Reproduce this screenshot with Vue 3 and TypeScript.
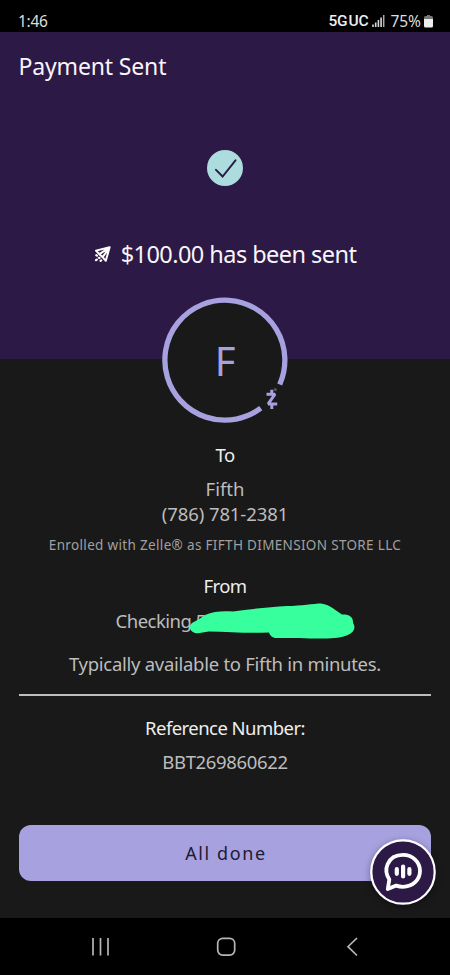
<script setup lang="ts">
const status = { time: '1:46', network: '5G UC', battery: '75%' }
const payment = {
  amount: '$100.00',
  name: 'Fifth',
  phone: '(786) 781-2381',
  enrolled: 'Enrolled with Zelle® as FIFTH DIMENSION STORE LLC',
  reference: 'BBT269860622',
}
</script>

<template>
  <div class="screen">
    <div class="status">
      <span class="time">{{ status.time }}</span>
      <span class="network">{{ status.network }}</span>
      <svg class="signal" width="13" height="12" viewBox="0 0 13 12">
        <path d="M1 9.5V12M3.7 7.5V12M6.4 5V12M9.1 2.5V12" stroke="#d8d8d8" stroke-width="1.6" />
        <path d="M11.7 0V12" stroke="#aaa" stroke-width="1.5" />
      </svg>
      <span class="battery-text">{{ status.battery }}</span>
      <svg class="battery" width="9" height="13" viewBox="0 0 9 13">
        <path d="M3 0h3v1h1.5Q9 1 9 3H0Q0 1 1.5 1H3Z" fill="#777" />
        <path d="M0 3.5H9V11Q9 12.5 7.5 12.5H1.5Q0 12.5 0 11Z" fill="#eee" />
      </svg>
    </div>

    <header class="hero">
      <h1 class="title">Payment Sent</h1>
      <svg class="check" width="36" height="36" viewBox="0 0 36 36">
        <circle cx="18" cy="18" r="18" fill="#addcdf" />
        <path d="M9 19.8L15.6 26.5L28.5 10.3" fill="none" stroke="#281a42" stroke-width="1.9" stroke-linecap="round" />
      </svg>
      <div class="sent">
        <svg class="plane" width="17" height="17" viewBox="0 0 17 17" fill="none" stroke="#fff" stroke-linejoin="round" stroke-linecap="round">
          <path d="M15.6 1.3L2 4.6L5.4 8.2L8.6 11.2L11.8 14.8Z M15.6 1.3L5.4 8.2L8.6 11.2Z" stroke-width="2" />
          <path d="M2.3 9.2L3 9.6M4.9 11.8L5.4 12M2 14.2L2.8 13.6M6.6 14.8L7.2 14.4" stroke-width="2.2" />
        </svg>
        <span class="sent-text">{{ payment.amount }} has been sent</span>
      </div>
    </header>

    <main class="details">
      <svg class="avatar" width="126" height="126" viewBox="0 0 126 126">
        <circle cx="63" cy="63" r="62" fill="#191919" />
        <path d="M117.7 87.5A60 60 0 1 0 98.8 111.2" fill="none" stroke="#a7a1df" stroke-width="5.3" />
        <text class="initial" x="63.2" y="78.8" text-anchor="middle">{{ payment.name[0] }}</text>
        <path d="M104.5 97.2H113L106.2 106.9H115.2M109.8 92.8V97.5M109.8 107V112" fill="none" stroke="#a7a1df" stroke-width="3" stroke-linejoin="bevel" />
        <circle cx="113.3" cy="92.5" r="1.6" fill="#56535f" />
      </svg>
      <h2 class="label to">To</h2>
      <p class="value name">{{ payment.name }}</p>
      <p class="value phone">{{ payment.phone }}</p>
      <p class="enrolled">{{ payment.enrolled }}</p>
      <h2 class="label from">From</h2>
      <div class="account">
        <span class="value checking">Checking 5</span>
        <svg class="marker" width="166" height="38" viewBox="0 0 166 38">
          <path d="M3 21C7 19 12 16 16 13C25 9 34 9 44 9.5C62 7 81 5 98 4C112 4 125 1.5 132 1.5C142 3 147 9 153 12.5C160 12 164.5 15 164 21C168 27 163 32 156 34C145 38 122 36 86 36C82 35 81 33 80 30.5C60 31.5 40 30 20 29.5C14 30 10 32 6 31C1 30 -1 24 3 21Z" fill="#37ff9d" />
        </svg>
      </div>
      <p class="value timing">Typically available to {{ payment.name }} in minutes.</p>
      <hr class="divider" />
      <h2 class="label ref-label">Reference Number:</h2>
      <p class="value ref">{{ payment.reference }}</p>
      <div class="action">
        <button class="done" type="button">All done</button>
        <button class="chat" type="button" aria-label="Chat">
          <svg width="66" height="66" viewBox="0 0 66 66">
            <circle cx="33" cy="33" r="31.7" fill="#2d1945" stroke="#fff" stroke-width="2.2" />
            <path d="M17.8 50L19.3 40.6C16.2 35.5 15.3 30.3 17.6 25.2C20.3 19 26.2 15.9 33 15.9C42.7 15.9 50 22.9 50 31.8C50 40.8 42.7 47.8 33 47.8C30.4 47.8 28.5 47.4 26.2 46.6Z" fill="none" stroke="#fff" stroke-width="3.8" stroke-linejoin="round" />
            <path d="M26.8 30.2V34.8M33.1 27.5V37.5M39.4 30.2V34.8" stroke="#fff" stroke-width="4.2" stroke-linecap="round" />
          </svg>
        </button>
      </div>
    </main>

    <nav class="nav">
      <svg width="450" height="57" viewBox="0 0 450 57" fill="none" stroke="#b6b6b6" stroke-width="1.7">
        <path d="M93 20V37.5M100.5 20V37.5M108 20V37.5" />
        <rect x="217.7" y="20.3" width="17" height="16.8" rx="5" />
        <path d="M357 20L348 28.7L357 37.5" />
      </svg>
    </nav>
  </div>
</template>

<style>
body {
  margin: 0;
  background: #000;
}
</style>

<style scoped>
.screen {
  width: 450px;
  height: 975px;
  display: flex;
  flex-direction: column;
  overflow: hidden;
  background: #191919;
  font-family: "Noto Sans", sans-serif;
}
h1, h2, p {
  margin: 0;
  font-weight: 400;
  white-space: nowrap;
}
.status {
  height: 32px;
  flex: none;
  box-sizing: border-box;
  padding: 10px 17px 0 18px;
  display: flex;
  align-items: center;
  background: #000;
  color: #ddd;
  font-size: 15.5px;
  line-height: 22px;
}
.time {
  letter-spacing: -0.3px;
}
.network {
  margin-left: auto;
  font: 500 15.5px/22px Roboto, sans-serif;
  letter-spacing: -0.2px;
  word-spacing: -2.5px;
  color: #eee;
}
.signal {
  margin: 0 5px 0 4px;
}
.battery-text {
  letter-spacing: 0;
}
.battery {
  margin-left: 3px;
}
.hero {
  height: 327px;
  flex: none;
  display: flex;
  flex-direction: column;
  align-items: center;
  background: #2d1945;
  color: #f8f5fa;
}
.title {
  align-self: flex-start;
  margin: 17.5px 0 0.5px 18.5px;
  font-size: 23px;
  line-height: 32px;
  letter-spacing: -0.15px;
}
.check {
  margin-top: 68px;
}
.sent {
  display: flex;
  align-items: center;
  gap: 10px;
  margin-top: 50px;
  height: 36px;
  font-size: 23.5px;
  line-height: 36px;
  letter-spacing: -0.55px;
  white-space: nowrap;
}
.details {
  height: 559px;
  flex: none;
  display: flex;
  flex-direction: column;
  align-items: center;
  padding: 0 19px;
}
.avatar {
  flex: none;
  margin-top: -62px;
}
.initial {
  font-size: 40px;
  fill: #a7a1df;
}
.label {
  color: #eee;
  font-size: 18.5px;
  line-height: 25px;
  letter-spacing: -0.55px;
}
.value {
  color: #bdbdbd;
  font-size: 18.5px;
  line-height: 25px;
}
.to { margin-top: 19px; }
.name { margin-top: 9px; }
.phone { letter-spacing: -0.1px; }
.enrolled {
  margin-top: 9px;
  color: #a0a0a0;
  font-size: 13.5px;
  line-height: 20px;
  letter-spacing: 0.33px;
}
.from { margin-top: 18px; }
.account {
  position: relative;
  width: 219px;
  height: 25px;
  margin-top: 10px;
  white-space: nowrap;
}
.checking {
  display: block;
  letter-spacing: -0.5px;
}
.marker {
  position: absolute;
  left: 73px;
  top: -6px;
}
.timing {
  margin-top: 18px;
  letter-spacing: -0.28px;
}
.divider {
  width: 100%;
  height: 1.5px;
  margin: 18px 0 0;
  border: 0;
  background: #bdbdbd;
}
.ref-label { margin-top: 19.5px; }
.ref {
  margin-top: 9px;
  letter-spacing: -0.35px;
}
.action {
  position: relative;
  width: 100%;
  margin-top: 51px;
}
.done {
  display: block;
  width: 100%;
  height: 56px;
  padding: 0 0 0 2px;
  border: 0;
  border-radius: 12px;
  background: #a7a1df;
  color: #201b32;
  font: 400 18px/56px "Noto Sans", sans-serif;
  letter-spacing: 1.6px;
}
.chat {
  position: absolute;
  top: 14px;
  right: -5px;
  width: 66px;
  height: 66px;
  padding: 0;
  border: 0;
  border-radius: 50%;
  background: none;
  box-shadow: 0 2px 7px rgba(0, 0, 0, 0.35);
}
.chat svg { display: block; }
.nav {
  height: 57px;
  flex: none;
  background: #000;
}
</style>
